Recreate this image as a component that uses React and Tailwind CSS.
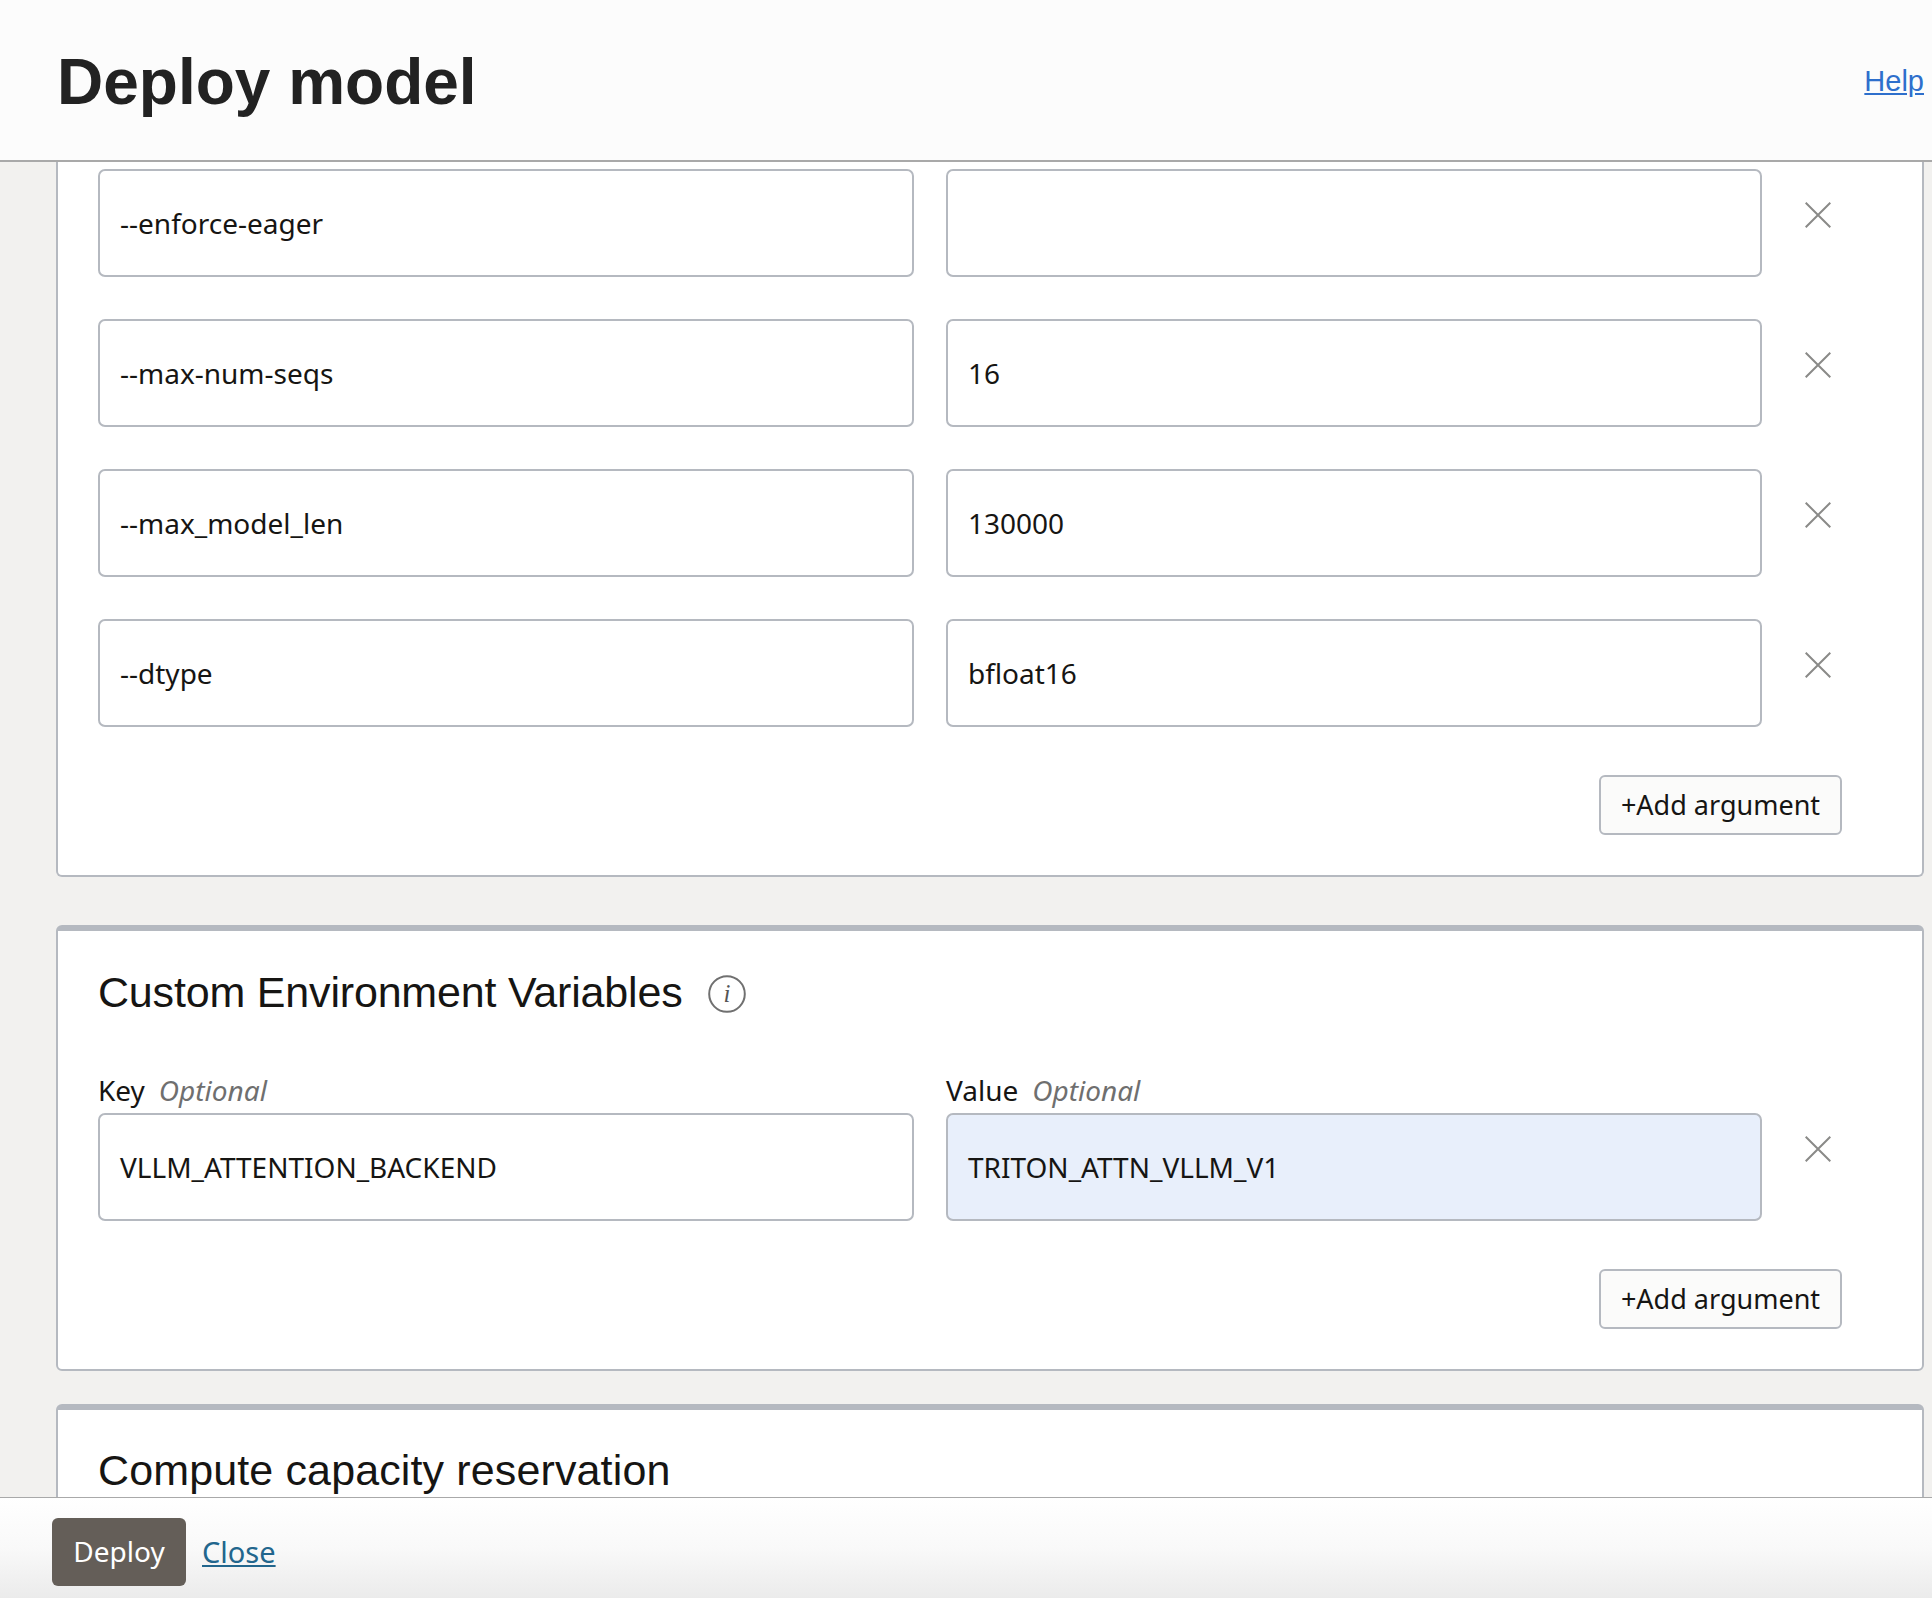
import React from "react";

const uiFont = "font-['Noto_Sans',sans-serif]";
const headFont = "font-['Liberation_Sans',Arial,sans-serif]";

const args = [
  ["--enforce-eager", ""],
  ["--max-num-seqs", "16"],
  ["--max_model_len", "130000"],
  ["--dtype", "bfloat16"],
];

function Field({ value, highlight }) {
  return (
    <div
      className={`w-[816px] h-[108px] border-2 border-[#b5b9c0] rounded-[7px] pl-[20px] flex items-center text-[28px] text-[#161513] ${uiFont} ${
        highlight ? "bg-[#e8effb]" : "bg-white"
      }`}
    >
      {value}
    </div>
  );
}

function CloseIcon() {
  return (
    <svg width="26" height="26" viewBox="0 0 26 26" fill="none" stroke="#8a8a88" strokeWidth="2" className="block">
      <path d="M0.7 0.7L25.3 25.3M25.3 0.7L0.7 25.3" />
    </svg>
  );
}

function AddButton() {
  return (
    <div className="flex justify-end pr-[80px]">
      <button className={`w-[243px] h-[60px] bg-[#fbfbfa] border-2 border-[#b5b9c0] rounded-[6px] text-[27px] text-[#161513] ${uiFont}`}>
        +Add argument
      </button>
    </div>
  );
}

function InfoIcon() {
  return (
    <svg width="38" height="38" viewBox="0 0 38 38" fill="none" className="block mt-[4px] ml-[1px]">
      <circle cx="19" cy="19" r="17.8" stroke="#707070" strokeWidth="2" />
      <text x="19" y="27" textAnchor="middle" fontFamily="'Liberation Serif', serif" fontStyle="italic" fontSize="25" fill="#555">
        i
      </text>
    </svg>
  );
}

function Label({ name }) {
  return (
    <div className={`w-[816px] h-[33px] text-[28px] leading-[33px] text-[#161513] ${uiFont}`}>
      {name}
      <span className="ml-[14px] italic text-[#6f6f6f]">Optional</span>
    </div>
  );
}

export default function App() {
  return (
    <div className="h-[1598px] flex flex-col overflow-hidden bg-[#f2f1ef]">
      <header className="h-[162px] shrink-0 bg-[#fcfcfc] border-b-2 border-[#a9a9a9] flex items-center justify-between pl-[57px] pr-[8px]">
        <h1 className={`mt-[4px] text-[64px] font-bold text-[#222] ${headFont}`}>Deploy model</h1>
        <a href="#" className={`mt-[4px] text-[29px] text-[#2e6fcc] underline ${headFont}`}>Help</a>
      </header>

      <main className="flex-1 min-h-0 overflow-hidden pl-[56px] pr-[8px]">
        <section className="h-[715px] bg-white border-x-2 border-b-2 border-[#b5b9c0] rounded-b-[6px] pt-[7px] pl-[40px]">
          <div className="flex flex-col gap-[42px]">
            {args.map(([key, value]) => (
              <div key={key} className="flex gap-[32px]">
                <Field value={key} />
                <Field value={value} />
                <div className="ml-[11px] pt-[33px]">
                  <CloseIcon />
                </div>
              </div>
            ))}
          </div>
          <div className="mt-[48px]">
            <AddButton />
          </div>
        </section>

        <section className="mt-[48px] h-[446px] bg-white border-x-2 border-b-2 border-t-[6px] border-[#b5b9c0] rounded-[6px] pl-[40px]">
          <div className="flex items-center h-[80px] mt-[21px] gap-[25px]">
            <h2 className={`text-[43px] tracking-[-0.18px] text-[#161513] ${headFont}`}>Custom Environment Variables</h2>
            <InfoIcon />
          </div>
          <div className="flex gap-[32px] mt-[42px] mb-[6px]">
            <Label name="Key" />
            <Label name="Value" />
          </div>
          <div className="flex gap-[32px]">
            <Field value="VLLM_ATTENTION_BACKEND" />
            <Field value="TRITON_ATTN_VLLM_V1" highlight />
            <div className="ml-[11px] pt-[23px]">
              <CloseIcon />
            </div>
          </div>
          <div className="mt-[48px]">
            <AddButton />
          </div>
        </section>

        <section className="mt-[33px] h-[200px] bg-white border-x-2 border-t-[6px] border-[#b5b9c0] rounded-t-[6px] pl-[40px]">
          <h2 className={`mt-[30px] text-[43px] tracking-[0.13px] leading-[60px] text-[#161513] ${headFont}`}>Compute capacity reservation</h2>
        </section>
      </main>

      <footer className="h-[101px] shrink-0 border-t border-[#a9a9a9] bg-gradient-to-b from-white via-[#f9f9f9] to-[#ebebeb] flex items-start pt-[20px] pl-[52px] gap-[16px]">
        <button className={`w-[134px] h-[68px] pb-[2px] bg-[#645e58] rounded-[6px] text-white text-[28px] ${uiFont}`}>Deploy</button>
        <a href="#" className={`mt-[12px] text-[29px] text-[#22668d] underline ${uiFont}`}>Close</a>
      </footer>
    </div>
  );
}
